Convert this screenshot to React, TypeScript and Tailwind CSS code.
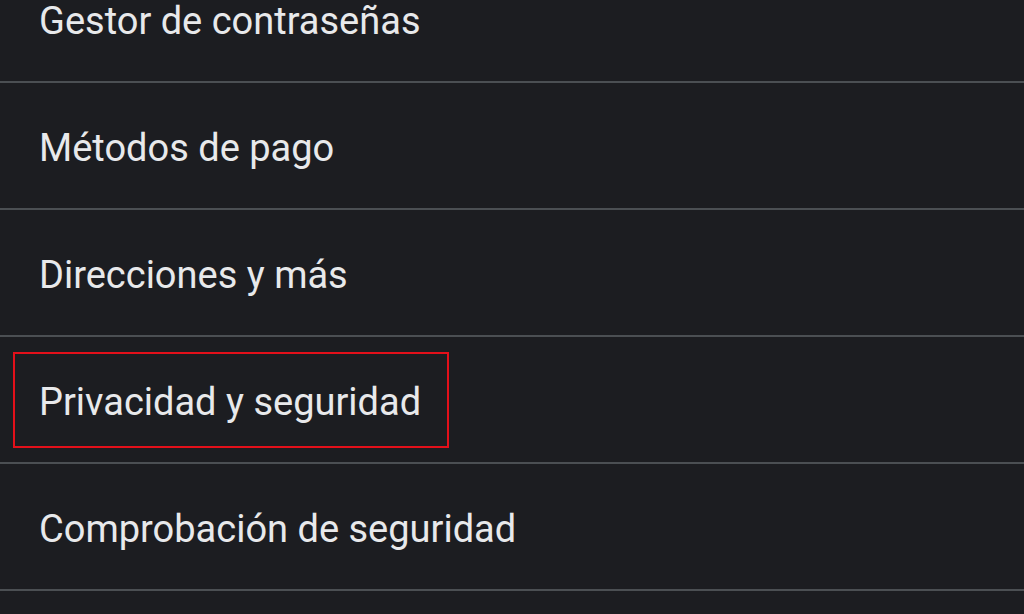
const items = [
  'Gestor de contraseñas',
  'Métodos de pago',
  'Direcciones y más',
  'Privacidad y seguridad',
  'Comprobación de seguridad',
  '',
];

export default function App() {
  return (
    <div
      className="h-[614px] w-[1024px] overflow-hidden bg-[#1c1d21]"
      style={{ fontFamily: 'Roboto, "Noto Sans", sans-serif' }}
    >
      <div className="-mt-[44px]">
        {items.map((label, i) => (
          <div
            key={i}
            className="relative flex h-[127px] items-center border-b-2 border-[#4b4f53] pl-[39px] pt-[5px]"
          >
            <span className="text-[38px] text-[#e8e9eb]">{label}</span>
            {label === 'Privacidad y seguridad' && (
              <div className="absolute left-[13px] top-[15px] h-[96px] w-[436px] border-2 border-[#e3101a]" />
            )}
          </div>
        ))}
      </div>
    </div>
  );
}
